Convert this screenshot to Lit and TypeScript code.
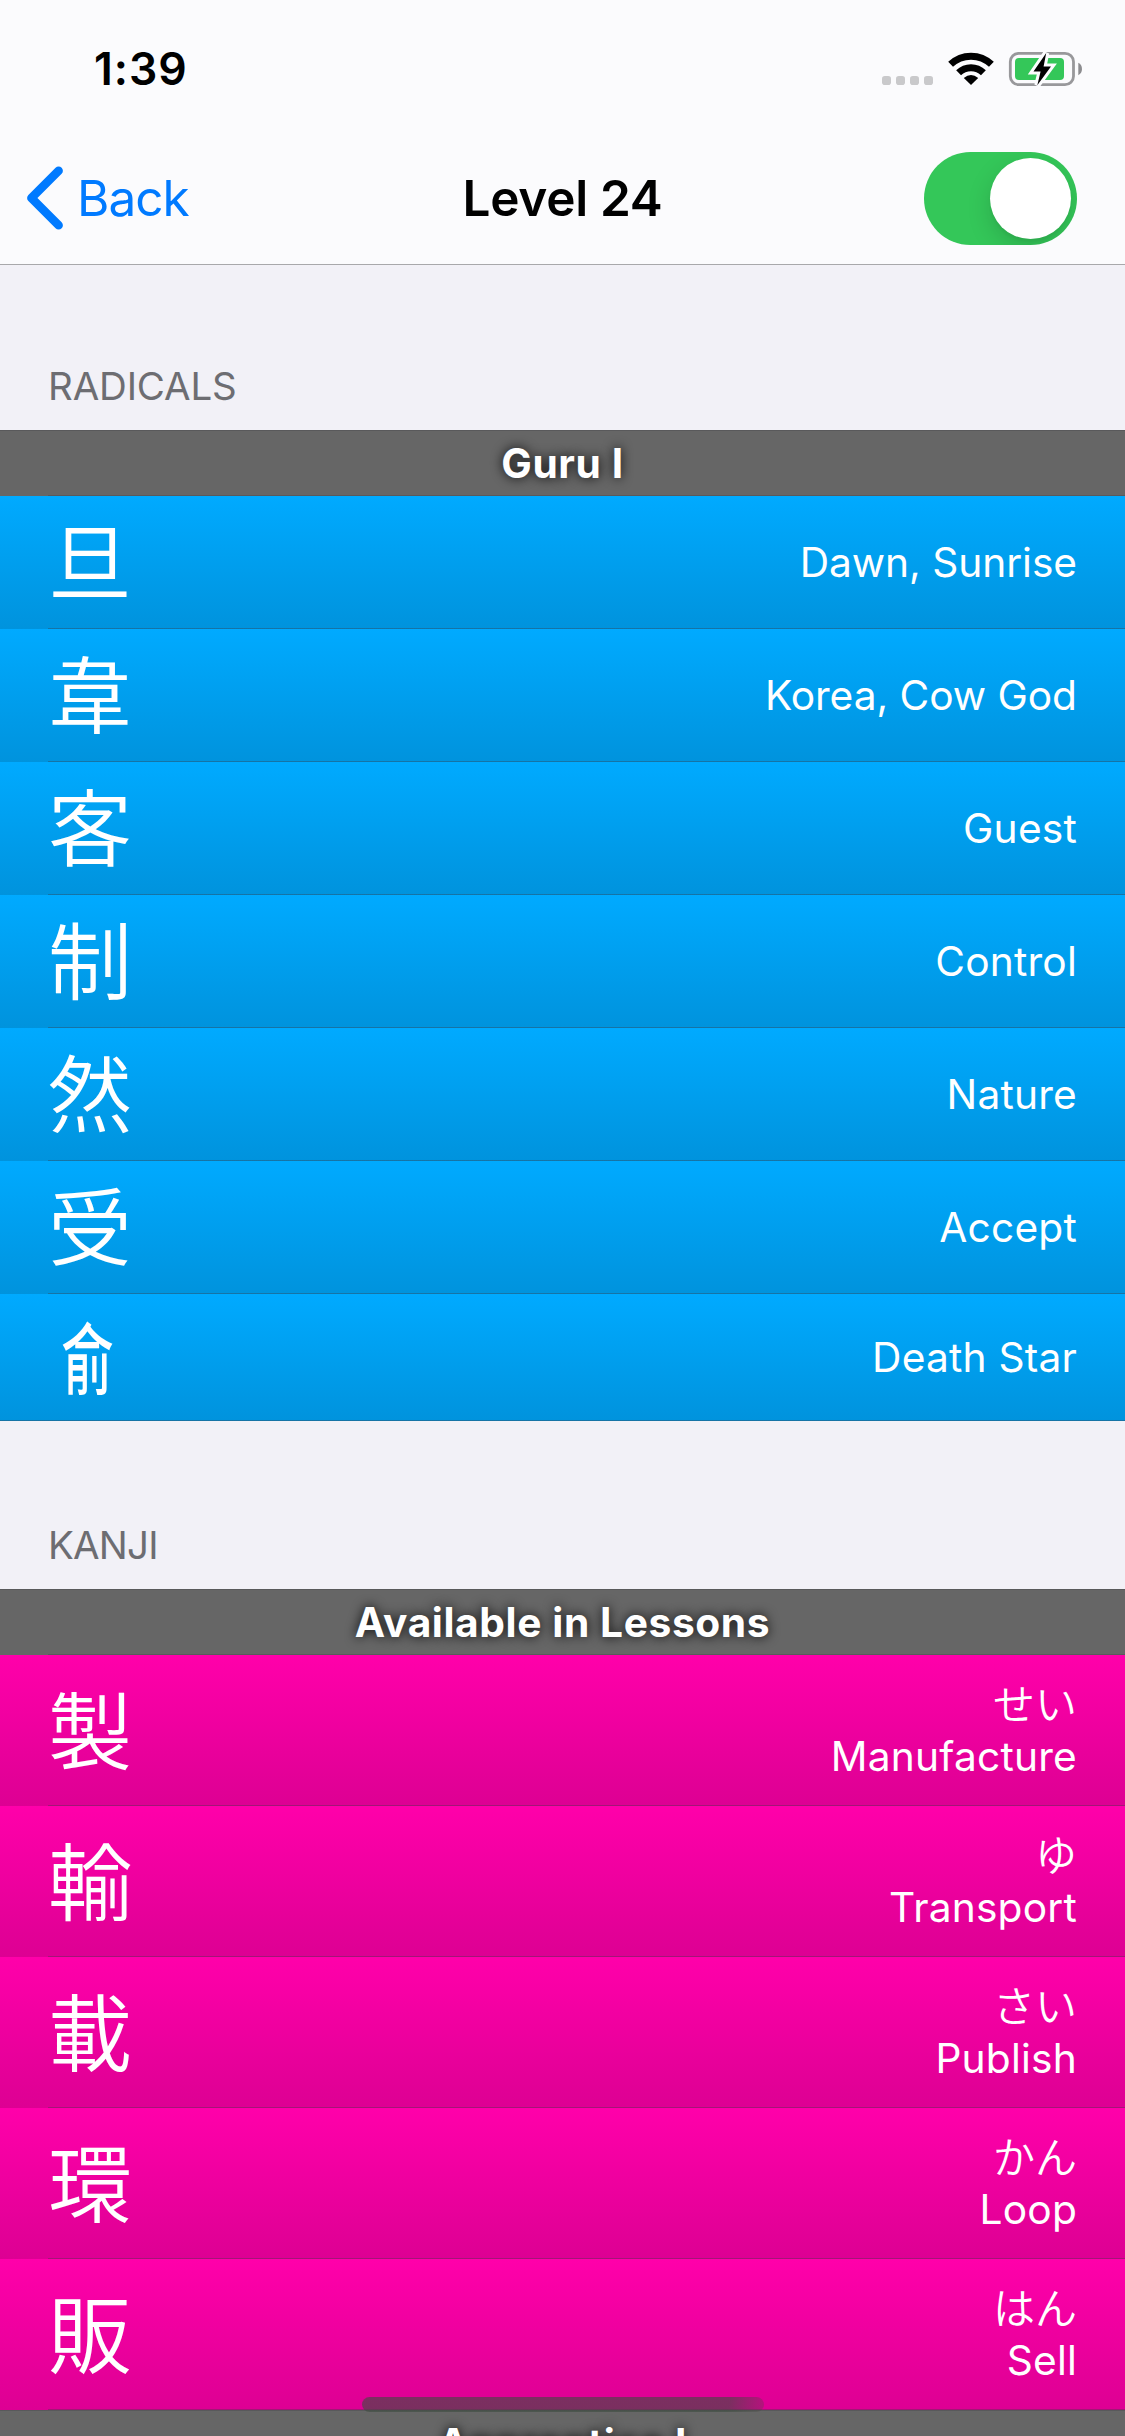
import { LitElement, html, css, svg } from "lit";
import { customElement, property } from "lit/decorators.js";
import { classMap } from "lit/directives/class-map.js";

interface Subject {
  glyph: string;
  meaning: string;
  reading?: string;
  narrow?: boolean;
}

const RADICALS: Subject[] = [
  { glyph: "旦", meaning: "Dawn, Sunrise" },
  { glyph: "韋", meaning: "Korea, Cow God" },
  { glyph: "客", meaning: "Guest" },
  { glyph: "制", meaning: "Control" },
  { glyph: "然", meaning: "Nature" },
  { glyph: "受", meaning: "Accept" },
  { glyph: "俞", meaning: "Death Star", narrow: true },
];

const KANJI: Subject[] = [
  { glyph: "製", reading: "せい", meaning: "Manufacture" },
  { glyph: "輸", reading: "ゆ", meaning: "Transport" },
  { glyph: "載", reading: "さい", meaning: "Publish" },
  { glyph: "環", reading: "かん", meaning: "Loop" },
  { glyph: "販", reading: "はん", meaning: "Sell" },
];

@customElement("status-bar")
class StatusBar extends LitElement {
  static styles = css`
    :host { display: flex; justify-content: space-between; height: 132px; box-sizing: border-box; padding: 45px 43px 0 94px; }
    .time { font-size: 44.5px; font-weight: 600; line-height: 48px; letter-spacing: 1px; color: #000; }
    .icons { width: 202px; height: 44px; display: block; }
  `;

  render() {
    return html`
      <span class="time">1:39</span>
      <svg class="icons" viewBox="880 45 202 44" aria-hidden="true">
        ${[882, 896, 910, 924].map(
          (x) => svg`<rect x=${x} y="76" width="9" height="9" rx="2.8" fill="#c9c9cb"/>`,
        )}
        <path d="M971 85 L963.8 78 Q971 72 978.2 78 Z" fill="#000"/>
        <path d="M958.6 72.2 A17.8 17.8 0 0 1 983.4 72.2" transform="translate(0 0.5)" fill="none" stroke="#000" stroke-width="7"/>
        <path d="M950.6 64.3 A29.6 29.6 0 0 1 991.4 64.3" fill="none" stroke="#000" stroke-width="7"/>
        <rect x="1010.3" y="53.3" width="63.2" height="31.4" rx="8.5" fill="none" stroke="#98989b" stroke-width="2.8"/>
        <path d="M1078.3 62.8 C1083.2 65 1083.2 73 1078.3 75.2 Z" fill="#8c8c8f"/>
        <rect x="1015" y="58" width="49" height="22" rx="4" fill="#34c759"/>
        <path d="M1046.2 53 L1033.5 71.4 L1040.6 71.4 L1037.3 85.2 L1051 66.4 L1043.6 66.4 Z" fill="#000" stroke="#fcfcfe" stroke-width="6" paint-order="stroke"/>
      </svg>
    `;
  }
}

@customElement("nav-bar")
class NavBar extends LitElement {
  static styles = css`
    :host { display: grid; grid-template-columns: 1fr auto 1fr; align-items: center; height: 133px; box-sizing: border-box; border-bottom: 1px solid #a8a8ab; padding: 0 48px 0 24px; font-size: 49.5px; line-height: 60px; }
    .back { display: flex; align-items: center; gap: 11px; color: #007aff; letter-spacing: -1px; }
    .chevron { width: 42px; height: 66px; display: block; }
    .title { font-weight: 600; color: #000; letter-spacing: -0.3px; transform: translateX(12px); }
    .toggle { justify-self: end; display: flex; justify-content: flex-end; width: 153px; height: 93px; box-sizing: border-box; padding: 6px; border-radius: 47px; background: #34c759; overflow: hidden; }
    .knob { width: 81px; height: 81px; border-radius: 50%; background: #fff; box-shadow: 0 9px 24px rgba(0, 0, 0, 0.15), 0 3px 3px rgba(0, 0, 0, 0.04); }
  `;

  render() {
    return html`
      <span class="back">
        <svg class="chevron" viewBox="0 0 42 66" aria-hidden="true">
          <path d="M34.6 5.8 L7.4 33 L34.6 60.2" fill="none" stroke="#007aff" stroke-width="8.6" stroke-linecap="round" stroke-linejoin="round"/>
        </svg>
        <span>Back</span>
      </span>
      <span class="title">Level 24</span>
      <span class="toggle"><span class="knob"></span></span>
    `;
  }
}

@customElement("subject-row")
class SubjectRow extends LitElement {
  @property({ attribute: false }) subject!: Subject;

  static styles = css`
    :host { display: block; }
    .row { display: flex; align-items: center; justify-content: space-between; box-sizing: border-box; height: 133px; padding: 0 48px; color: #fff; background: linear-gradient(rgba(60, 60, 67, 0.36), rgba(60, 60, 67, 0.36)) 48px 100% / 100% 1px no-repeat, linear-gradient(#00aaff, #0093dd); }
    .short { height: 127px; background-position: 0 100%, 0 0; }
    .tall { height: 151px; background: linear-gradient(rgba(60, 60, 67, 0.36), rgba(60, 60, 67, 0.36)) 48px 100% / 100% 1px no-repeat, linear-gradient(#ff00aa, #dd0093); }
    .glyph { font-family: "Noto Sans CJK JP", sans-serif; font-weight: 350; font-size: 84px; line-height: 84px; padding-bottom: 10px; }
    .tall .glyph { padding-bottom: 8px; }
    .short .glyph { font-family: "Noto Sans CJK SC", sans-serif; font-weight: 500; font-size: 77px; line-height: 77px; padding: 0 0 6px 1px; transform: scaleX(0.68); }
    .details { display: flex; flex-direction: column; align-items: flex-end; }
    .tall .details { padding-bottom: 3px; gap: 5px; }
    .reading { font-family: "Noto Sans CJK JP", sans-serif; font-weight: 350; font-size: 42px; line-height: 50px; }
    .meaning { font-size: 40.7px; line-height: 50px; letter-spacing: 0.2px; }
    .long { letter-spacing: -0.05px; }
  `;

  render() {
    const { glyph, meaning, reading, narrow } = this.subject;
    return html`
      <div class=${classMap({ row: true, tall: !!reading, short: !!narrow })}>
        <span class="glyph">${glyph}</span>
        <span class="details">
          ${reading ? html`<span class="reading" lang="ja">${reading}</span>` : null}
          <span class=${classMap({ meaning: true, long: meaning.includes(",") })}>${meaning}</span>
        </span>
      </div>
    `;
  }
}

@customElement("app-root")
class AppRoot extends LitElement {
  static styles = css`
    :host { display: block; position: relative; height: 2436px; overflow: hidden; background: #f2f1f7; font-family: Inter, "Noto Sans CJK JP", sans-serif; }
    .header { background: #fbfbfd; }
    .section { display: flex; align-items: flex-end; box-sizing: border-box; height: 168px; padding: 0 48px 20px; font-size: 38.5px; line-height: 48px; letter-spacing: -0.15px; color: #6d6d72; }
    .first { height: 165px; }
    .kanji { letter-spacing: -0.8px; }
    .stage { height: 66px; text-align: center; font-size: 40.7px; font-weight: 700; line-height: 67px; letter-spacing: 0.6px; color: #fff; text-shadow: 0 0 12px rgba(0, 0, 0, 0.95); background: linear-gradient(#59595b, #59595b) 0 0 / 100% 1px no-repeat, linear-gradient(#59595b, #59595b) 48px 65px / 100% 1px no-repeat, #666; }
    .home { position: absolute; left: 362px; top: 2397px; width: 402px; height: 15px; border-radius: 8px; background: linear-gradient(100deg, rgba(62, 76, 64, 0.62) 91%, rgba(70, 70, 64, 0.3) 99%); }
  `;

  render() {
    return html`
      <div class="header">
        <status-bar></status-bar>
        <nav-bar></nav-bar>
      </div>
      <div class="section first">RADICALS</div>
      <div class="stage">Guru I</div>
      ${RADICALS.map((s) => html`<subject-row .subject=${s}></subject-row>`)}
      <div class="section kanji">KANJI</div>
      <div class="stage">Available in Lessons</div>
      ${KANJI.map((s) => html`<subject-row .subject=${s}></subject-row>`)}
      <div class="stage">Apprentice I</div>
      <div class="home"></div>
    `;
  }
}
